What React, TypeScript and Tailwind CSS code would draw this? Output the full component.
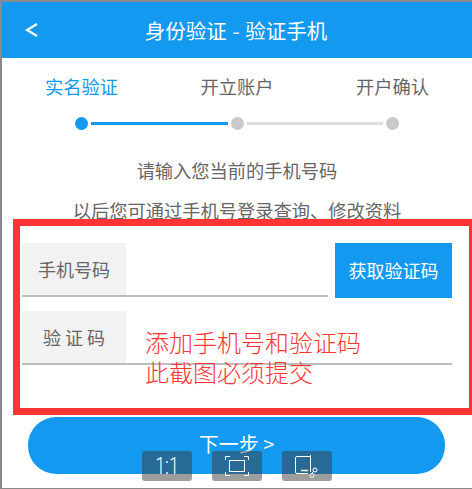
import React from "react";

const cjk = { fontFamily: '"Noto Sans CJK SC", "Noto Sans", sans-serif' };

function Dot({ active }: { active?: boolean }) {
  return <div className={`w-[13px] h-[13px] rounded-full shrink-0 ${active ? "bg-[#1399f0]" : "bg-[#c9c9c9]"}`} />;
}

export default function App() {
  return (
    <div className="relative w-[472px] h-[489px] overflow-hidden bg-white border-l-2 border-t-2 border-b border-[#8a8a8a] flex flex-col" style={cjk}>
      <header className="relative h-[56px] shrink-0 bg-[#1399f0] flex items-center justify-center pr-[2px] text-white">
        <svg className="absolute left-[22px] top-[20px]" width="16" height="16" viewBox="0 0 16 16" fill="none">
          <path d="M13 2 L3 8 L13 14" stroke="white" strokeWidth="2.2" />
        </svg>
        <span className="text-[20.5px] leading-none [word-spacing:1px]">身份验证 - 验证手机</span>
      </header>

      <div className="flex justify-between pl-[43px] pr-[43px] pt-[15px] text-[18.25px] leading-[26px] text-[#666]">
        <span className="text-[#1399f0]">实名验证</span>
        <span>开立账户</span>
        <span>开户确认</span>
      </div>

      <div className="flex items-center pl-[73px] pt-[18px]">
        <Dot active />
        <div className="w-[137px] h-[3px] mx-[3px] bg-[#1399f0]" />
        <Dot />
        <div className="w-[136px] h-[3px] mx-[3px] bg-[#dedede]" />
        <Dot />
      </div>

      <div className="flex flex-col items-center pt-[27px] text-[18.25px] leading-[26px] text-[#666] gap-[14px]">
        <span>请输入您当前的手机号码</span>
        <span>以后您可通过手机号登录查询、修改资料</span>
      </div>

      <div className="flex flex-col pl-[20px] pt-[20px] gap-[13px]">
        <div className="flex items-start gap-[7px]">
          <div className="w-[306px] h-[54px] border-b-2 border-[#bdbdbd]">
            <div className="w-[104px] h-[52px] bg-[#f2f2f2] flex items-center justify-center text-[18px] text-[#666]">手机号码</div>
          </div>
          <button className="w-[117px] h-[55px] bg-[#1399f0] text-white text-[18px]">获取验证码</button>
        </div>
        <div className="w-[430px] h-[54px] border-b-2 border-[#bdbdbd]">
          <div className="w-[104px] h-[52px] pl-[4px] bg-[#f2f2f2] flex items-center justify-center text-[18px] text-[#666] tracking-[4px]">验证码</div>
        </div>
      </div>

      <button className="ml-[26px] mt-[52px] w-[417px] h-[57px] pb-[4px] rounded-[28px] bg-[#1399f0] text-white text-[20px] shrink-0">下一步 &gt;</button>

      <div className="absolute left-[11px] top-[217px] w-[463px] h-[196px] border-[7px] border-[#ff3434] pointer-events-none" />
      <div className="absolute left-[143px] top-[325px] text-[24px] leading-[30px] font-light text-[#ff3434] whitespace-nowrap">
        添加手机号和验证码
        <br />
        此截图必须提交
      </div>

      <div className="absolute left-[140px] top-[449px] w-[50px] h-[30px] rounded-[3px] bg-[#3c3c3c]/50 flex items-center justify-center">
        <span className="text-white text-[18px] font-light leading-none scale-y-[1.35] [font-family:Roboto,sans-serif]">1:1</span>
      </div>
      <div className="absolute left-[210px] top-[449px] w-[50px] h-[30px] rounded-[3px] bg-[#3c3c3c]/50 flex items-center justify-center">
        <svg width="26" height="22" viewBox="0 0 26 22" fill="none" stroke="white" strokeWidth="1">
          <path d="M1.5 5V1.5H6M24.5 5V1.5H20M1.5 17V20.5H6M24.5 17V20.5H20" />
          <rect x="5.5" y="5.5" width="15" height="11" />
        </svg>
      </div>
      <div className="absolute left-[280px] top-[449px] w-[50px] h-[30px] rounded-[3px] bg-[#3c3c3c]/50 flex items-center justify-center">
        <svg width="26" height="26" viewBox="0 0 26 26" fill="none" stroke="white" strokeWidth="1">
          <path d="M16.5 3.5H3Q1.5 3.5 1.5 5V19Q1.5 20.5 3 20.5H14" />
          <path d="M7 17.5H14" strokeWidth="1.5" />
          <path d="M16.5 2V19M20 18L17 21" />
          <circle cx="21" cy="17" r="2" />
          <circle cx="18" cy="22.5" r="2" />
        </svg>
      </div>
    </div>
  );
}
